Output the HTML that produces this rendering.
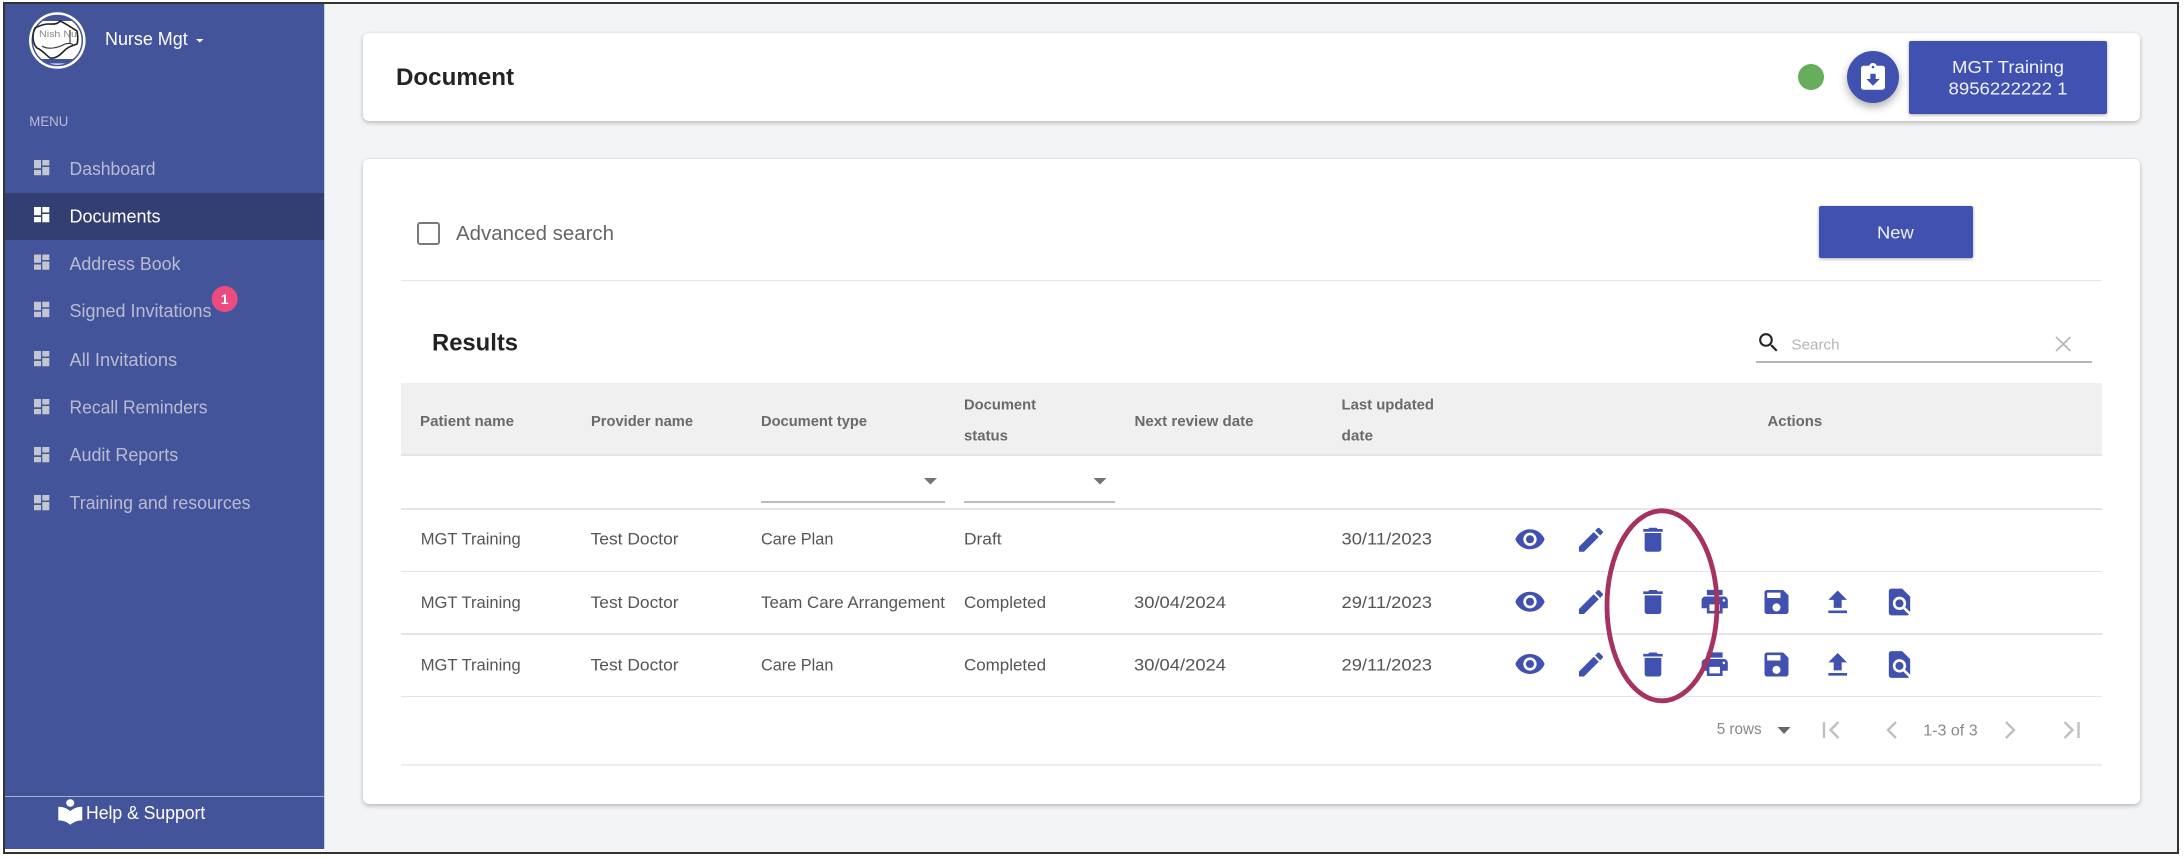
<!DOCTYPE html>
<html lang="en"><head><meta charset="utf-8"><title>Document</title>
<style>
html,body{margin:0;padding:0;background:#fff;width:2184px;height:858px;overflow:hidden}
.a{position:absolute;box-sizing:border-box}
#frame{left:3px;top:2px;width:2176px;height:852px;border:2px solid #333;background:#f3f4f6}
#side{left:5px;top:4px;width:319px;height:844.5px;background:#44549a}
#sidew{left:5px;top:848.5px;width:320px;height:3.5px;background:#fdfdfe}
#sideedge{left:324px;top:4px;width:1px;height:844.5px;background:#c9cde0}
#active{left:5px;top:193px;width:319px;height:47px;background:#333f73}
#sline{left:5px;top:795.5px;width:319px;height:1.5px;background:#a8aecf}
.card{background:#fff;border-radius:6px;box-shadow:0 2px 5px rgba(0,0,0,.22),0 0 3px rgba(0,0,0,.06)}
#c1{left:363px;top:33px;width:1777px;height:88px}
#c2{left:363px;top:159px;width:1777px;height:645px}
#dot{left:1798px;top:64px;width:26px;height:26px;border-radius:50%;background:#66ae5c}
#fab{left:1847px;top:51px;width:52px;height:52px;border-radius:50%;background:#4051b0;box-shadow:0 4px 9px rgba(0,0,0,.32)}
.btn{background:#4051b0;border-radius:2px;box-shadow:0 1px 3px rgba(0,0,0,.35)}
#b1{left:1909px;top:41px;width:198px;height:73px}
#b2{left:1819px;top:206px;width:154px;height:52px}
#cb{left:417px;top:222px;width:23px;height:23px;border:2.5px solid #7a7a7a;border-radius:3px}
#d1{left:401px;top:280px;width:1700px;height:1px;background:#e6e6e6}
#su{left:1755.5px;top:361px;width:336.500px;height:2px;background:#b5b5b5}
#th{left:401px;top:383px;width:1701px;height:73px;background:#f0f0f0;border-bottom:2px solid #e5e5e5}
.l{left:401px;width:1701px;height:1.5px;background:#e4e4e4}
.u{height:2px;background:#bdbdbd;top:501px}
svg{position:absolute;left:0;top:0}
text{font-family:"Liberation Sans",sans-serif}
</style></head><body>
<div class="a" id="frame"></div>
<div class="a" id="side"></div><div class="a" id="sidew"></div><div class="a" id="sideedge"></div>
<div class="a" id="active"></div><div class="a" id="sline"></div>
<div class="a card" id="c1"></div><div class="a card" id="c2"></div>
<div class="a" id="dot"></div><div class="a" id="fab"></div>
<div class="a btn" id="b1"></div><div class="a btn" id="b2"></div>
<div class="a" id="cb"></div><div class="a" id="d1"></div><div class="a" id="su"></div>
<div class="a" id="th"></div>
<div class="a l" style="top:508px"></div><div class="a l" style="top:570.5px"></div>
<div class="a l" style="top:633px"></div><div class="a l" style="top:695.5px"></div>
<div class="a l" style="top:764px;height:2px;background:#eee"></div>
<div class="a u" style="left:761px;width:184px"></div>
<div class="a u" style="left:964px;width:151px"></div>
<svg width="2184" height="858" viewBox="0 0 2184 858" xmlns="http://www.w3.org/2000/svg">
<defs>
<clipPath id="lc"><circle cx="57.3" cy="40.5" r="25"/></clipPath>
<path id="dash" d="M0 0h7v8.300H0zM0 10h7v5.300H0zM8.300 0h7v5.500h-7zM8.300 7h7v8.300h-7z"/>
<path id="eye" d="M12 4.5C7 4.5 2.73 7.61 1 12c1.73 4.39 6 7.5 11 7.5s9.27-3.11 11-7.5c-1.73-4.39-6-7.5-11-7.5zM12 17c-2.76 0-5-2.24-5-5s2.24-5 5-5 5 2.24 5 5-2.24 5-5 5zm0-8c-1.66 0-3 1.34-3 3s1.34 3 3 3 3-1.34 3-3-1.34-3-3-3z"/>
<path id="edit" d="M3 17.25V21h3.75L17.81 9.94l-3.75-3.75L3 17.25zM20.71 7.04c.39-.39.39-1.02 0-1.41l-2.34-2.34c-.39-.39-1.02-.39-1.41 0l-1.83 1.83 3.75 3.75 1.83-1.83z"/>
<path id="del" d="M6 19c0 1.1.9 2 2 2h8c1.1 0 2-.9 2-2V7H6v12zM19 4h-3.5l-1-1h-5l-1 1H5v2h14V4z"/>
<path id="prt" d="M19 8H5c-1.66 0-3 1.34-3 3v6h4v4h12v-4h4v-6c0-1.66-1.34-3-3-3zm-3 11H8v-5h8v5zm3-7c-.55 0-1-.45-1-1s.45-1 1-1 1 .45 1 1-.45 1-1 1zm-1-9H6v4h12V3z"/>
<path id="sav" d="M17 3H5c-1.11 0-2 .9-2 2v14c0 1.1.89 2 2 2h14c1.1 0 2-.9 2-2V7l-4-4zm-5 16c-1.66 0-3-1.34-3-3s1.34-3 3-3 3 1.34 3 3-1.34 3-3 3zm3-10H5V5h10v4z"/>
<path id="upl" d="M9 16h6v-6h4l-7-7-7 7h4zm-4 2h14v2H5z"/>
<path id="fnd" d="M20 19.59V8l-6-6H6c-1.1 0-1.99.9-1.99 2L4 20c0 1.1.89 2 1.99 2H18c.45 0 .85-.15 1.19-.4l-4.43-4.43c-.8.52-1.74.83-2.76.83-2.76 0-5-2.24-5-5s2.24-5 5-5 5 2.24 5 5c0 1.02-.31 1.96-.83 2.75L20 19.59zM9 13c0 1.66 1.34 3 3 3s3-1.34 3-3-1.34-3-3-3-3 1.34-3 3z"/>
</defs>

<!-- logo -->
<circle cx="57.3" cy="40.5" r="28.3" fill="#fff"/>
<circle cx="57.3" cy="40.5" r="25" fill="#fff" stroke="#44549a" stroke-width="1.5"/>
<g clip-path="url(#lc)"><rect x="29" y="15" width="57" height="6" fill="#44549a"/><rect x="29" y="59" width="57" height="4.5" fill="#44549a"/></g>
<text x="39" y="37" font-size="9" fill="#888" textLength="38" lengthAdjust="spacingAndGlyphs">Nish Nu</text>
<path d="M35 28c4-2 9-4 13-4s9 1 12-3c5 2 12 7 17 10 1 5 1 10 0 13-5 2-10 3-14 8-5 5-9 7-13 6-4-3-8-8-13-10-3-3-4-7-4-11 0-4 1-7 2-9z" fill="none" stroke="#222" stroke-width="1.6"/>
<path d="M42 46c6 4 16 2 23-2 4-1 7-1 9 2M70 30v13" fill="none" stroke="#333" stroke-width="1.1"/>

<!-- sidebar text -->
<text x="105" y="45" font-size="18" fill="#fff" textLength="82.7" lengthAdjust="spacingAndGlyphs">Nurse Mgt</text>
<path d="M196 39h7.5l-3.75 3.5z" fill="#fff"/>
<text x="29.3" y="126" font-size="14" fill="#b9bcd0" textLength="39" lengthAdjust="spacingAndGlyphs">MENU</text>
<g fill="#c3c5d0">
<use href="#dash" transform="translate(34,160)"/>
<use href="#dash" transform="translate(34,254.500)"/>
<use href="#dash" transform="translate(34,301.800)"/>
<use href="#dash" transform="translate(34,351)"/>
<use href="#dash" transform="translate(34,399)"/>
<use href="#dash" transform="translate(34,447)"/>
<use href="#dash" transform="translate(34,495)"/>
</g>
<use href="#dash" fill="#fff" transform="translate(34,207)"/>
<g font-size="18" fill="#b9bcd0">
<text x="69.5" y="175" textLength="86" lengthAdjust="spacingAndGlyphs">Dashboard</text>
<text x="69.5" y="222.5" fill="#fff" textLength="91" lengthAdjust="spacingAndGlyphs">Documents</text>
<text x="69.5" y="270" textLength="111" lengthAdjust="spacingAndGlyphs">Address Book</text>
<text x="69.5" y="317" textLength="142" lengthAdjust="spacingAndGlyphs">Signed Invitations</text>
<text x="69.5" y="366" textLength="107.7" lengthAdjust="spacingAndGlyphs">All Invitations</text>
<text x="69.5" y="413.500" textLength="138" lengthAdjust="spacingAndGlyphs">Recall Reminders</text>
<text x="69.5" y="461" textLength="108.7" lengthAdjust="spacingAndGlyphs">Audit Reports</text>
<text x="69.5" y="509" textLength="181" lengthAdjust="spacingAndGlyphs">Training and resources</text>
</g>
<circle cx="224.7" cy="299" r="13" fill="#ec4b80"/>
<text x="224.7" y="304" font-size="14" font-weight="700" fill="#fff" text-anchor="middle">1</text>
<path fill="#fff" transform="translate(54.300,796.800) scale(1.33,1.24)" d="M12 11.55C9.64 9.35 6.48 8 3 8v11c3.48 0 6.64 1.35 9 3.55 2.36-2.19 5.52-3.55 9-3.55V8c-3.48 0-6.64 1.35-9 3.55zM12 8c1.66 0 3-1.34 3-3s-1.34-3-3-3-3 1.34-3 3 1.34 3 3 3z"/>
<text x="86" y="819" font-size="18" fill="#fff" textLength="119.3" lengthAdjust="spacingAndGlyphs">Help &amp; Support</text>

<!-- top card -->
<text x="396" y="85" font-size="24" font-weight="700" fill="#242424" textLength="118" lengthAdjust="spacingAndGlyphs">Document</text>
<path fill="#fff" transform="translate(1857,61.7) scale(1.333)" d="M19 3h-4.18C14.4 1.84 13.3 1 12 1c-1.3 0-2.4.84-2.82 2H5c-1.1 0-2 .9-2 2v14c0 1.1.9 2 2 2h14c1.1 0 2-.9 2-2V5c0-1.1-.9-2-2-2zm-7 0c.55 0 1 .45 1 1s-.45 1-1 1-1-.45-1-1 .45-1 1-1zm0 15l-5-5h3V9h4v4h3l-5 5z"/>
<text x="1952" y="73" font-size="17.5" fill="#f0f1fa" textLength="112" lengthAdjust="spacingAndGlyphs">MGT Training</text>
<text x="1948.5" y="94.5" font-size="17.5" fill="#f0f1fa" textLength="119" lengthAdjust="spacingAndGlyphs">8956222222 1</text>
<text x="1877" y="238.5" font-size="17.5" fill="#f0f1fa" textLength="36.7" lengthAdjust="spacingAndGlyphs">New</text>

<!-- search row -->
<text x="456" y="240" font-size="20" fill="#666" textLength="158" lengthAdjust="spacingAndGlyphs">Advanced search</text>
<text x="432" y="350.5" font-size="24" font-weight="700" fill="#222" textLength="86" lengthAdjust="spacingAndGlyphs">Results</text>
<path fill="#222" transform="translate(1756,330) scale(1.05)" d="M15.5 14h-.79l-.28-.27C15.41 12.59 16 11.11 16 9.5 16 5.91 13.09 3 9.5 3S3 5.91 3 9.5 5.91 16 9.5 16c1.61 0 3.09-.59 4.23-1.57l.27.28v.79l5 4.99L20.49 19l-4.99-5zm-6 0C7.01 14 5 11.99 5 9.5S7.01 5 9.5 5 14 7.01 14 9.5 11.99 14 9.5 14z"/>
<text x="1791.500" y="349.5" font-size="15" fill="#b5b5b5" textLength="48" lengthAdjust="spacingAndGlyphs">Search</text>
<path d="M2056 337l14.500 14M2070.500 337l-14.500 14" stroke="#b5b5b5" stroke-width="1.6" fill="none"/>

<!-- table header -->
<g font-size="15" font-weight="700" fill="#6a6a6a">
<text x="420" y="426" textLength="94" lengthAdjust="spacingAndGlyphs">Patient name</text>
<text x="591" y="426" textLength="102" lengthAdjust="spacingAndGlyphs">Provider name</text>
<text x="761" y="426" textLength="106" lengthAdjust="spacingAndGlyphs">Document type</text>
<text x="964" y="409.5" textLength="72" lengthAdjust="spacingAndGlyphs">Document</text>
<text x="964" y="440.5" textLength="44" lengthAdjust="spacingAndGlyphs">status</text>
<text x="1134.500" y="426" textLength="119" lengthAdjust="spacingAndGlyphs">Next review date</text>
<text x="1341.500" y="409.5" textLength="92.5" lengthAdjust="spacingAndGlyphs">Last updated</text>
<text x="1341.500" y="440.5" textLength="31.6" lengthAdjust="spacingAndGlyphs">date</text>
<text x="1767.500" y="426" textLength="54.7" lengthAdjust="spacingAndGlyphs">Actions</text>
</g>
<path d="M924 478h13l-6.5 6.5zM1093.500 478h13l-6.5 6.5z" fill="#757575"/>

<!-- rows -->
<g font-size="16.7" fill="#555">
<text x="420.7" y="544.500" textLength="100" lengthAdjust="spacingAndGlyphs">MGT Training</text>
<text x="590.6" y="544.500" textLength="88" lengthAdjust="spacingAndGlyphs">Test Doctor</text>
<text x="761" y="544.500" textLength="72.4" lengthAdjust="spacingAndGlyphs">Care Plan</text>
<text x="964" y="544.500" textLength="37.6" lengthAdjust="spacingAndGlyphs">Draft</text>
<text x="1341.500" y="544.500" textLength="90.5" lengthAdjust="spacingAndGlyphs">30/11/2023</text>

<text x="420.7" y="608" textLength="100" lengthAdjust="spacingAndGlyphs">MGT Training</text>
<text x="590.6" y="608" textLength="88" lengthAdjust="spacingAndGlyphs">Test Doctor</text>
<text x="761" y="608" textLength="184" lengthAdjust="spacingAndGlyphs">Team Care Arrangement</text>
<text x="964" y="608" textLength="82" lengthAdjust="spacingAndGlyphs">Completed</text>
<text x="1134" y="608" textLength="92" lengthAdjust="spacingAndGlyphs">30/04/2024</text>
<text x="1341.500" y="608" textLength="90.5" lengthAdjust="spacingAndGlyphs">29/11/2023</text>

<text x="420.7" y="670.500" textLength="100" lengthAdjust="spacingAndGlyphs">MGT Training</text>
<text x="590.6" y="670.500" textLength="88" lengthAdjust="spacingAndGlyphs">Test Doctor</text>
<text x="761" y="670.500" textLength="72.4" lengthAdjust="spacingAndGlyphs">Care Plan</text>
<text x="964" y="670.500" textLength="82" lengthAdjust="spacingAndGlyphs">Completed</text>
<text x="1134" y="670.500" textLength="92" lengthAdjust="spacingAndGlyphs">30/04/2024</text>
<text x="1341.500" y="670.500" textLength="90.5" lengthAdjust="spacingAndGlyphs">29/11/2023</text>
</g>

<!-- action icons -->
<g fill="#4051b0">
<use href="#eye" transform="translate(1514,523.3) scale(1.333)"/>
<use href="#edit" transform="translate(1575,523.7) scale(1.333)"/>
<use href="#del" transform="translate(1636.300,523.7) scale(1.39,1.333)"/>

<use href="#eye" transform="translate(1514,585.7) scale(1.333)"/>
<use href="#edit" transform="translate(1575,586) scale(1.333)"/>
<use href="#del" transform="translate(1636.300,586) scale(1.39,1.333)"/>
<use href="#prt" transform="translate(1699,586) scale(1.31)"/>
<use href="#sav" transform="translate(1760.500,586) scale(1.333)"/>
<use href="#upl" transform="translate(1821.700,586.500) scale(1.333)"/>
<use href="#fnd" transform="translate(1883.500,586) scale(1.333)"/>

<use href="#eye" transform="translate(1514,648) scale(1.333)"/>
<use href="#edit" transform="translate(1575,648.500) scale(1.333)"/>
<use href="#del" transform="translate(1636.300,648.500) scale(1.39,1.333)"/>
<use href="#prt" transform="translate(1699,648.500) scale(1.31)"/>
<use href="#sav" transform="translate(1760.500,648.500) scale(1.333)"/>
<use href="#upl" transform="translate(1821.700,649) scale(1.333)"/>
<use href="#fnd" transform="translate(1883.500,648.500) scale(1.333)"/>
</g>
<ellipse cx="1662" cy="605.8" rx="55" ry="95" fill="none" stroke="#a5325f" stroke-width="4.8"/>

<!-- pagination -->
<text x="1716.700" y="734" font-size="15.5" fill="#888" textLength="45" lengthAdjust="spacingAndGlyphs">5 rows</text>
<path d="M1777.500 727h13l-6.500 7z" fill="#666"/>
<g fill="none" stroke="#c0c0c0" stroke-width="2.4">
<path d="M1824 722v16M1838.500 722l-8 8 8 8"/>
<path d="M1896 722l-8 8 8 8"/>
<path d="M2006 722l8 8-8 8"/>
<path d="M2064.500 722l8 8-8 8M2078.500 722v16"/>
</g>
<text x="1923.300" y="735.500" font-size="15.5" fill="#888" textLength="54.300" lengthAdjust="spacingAndGlyphs">1-3 of 3</text>
</svg>
</body></html>
